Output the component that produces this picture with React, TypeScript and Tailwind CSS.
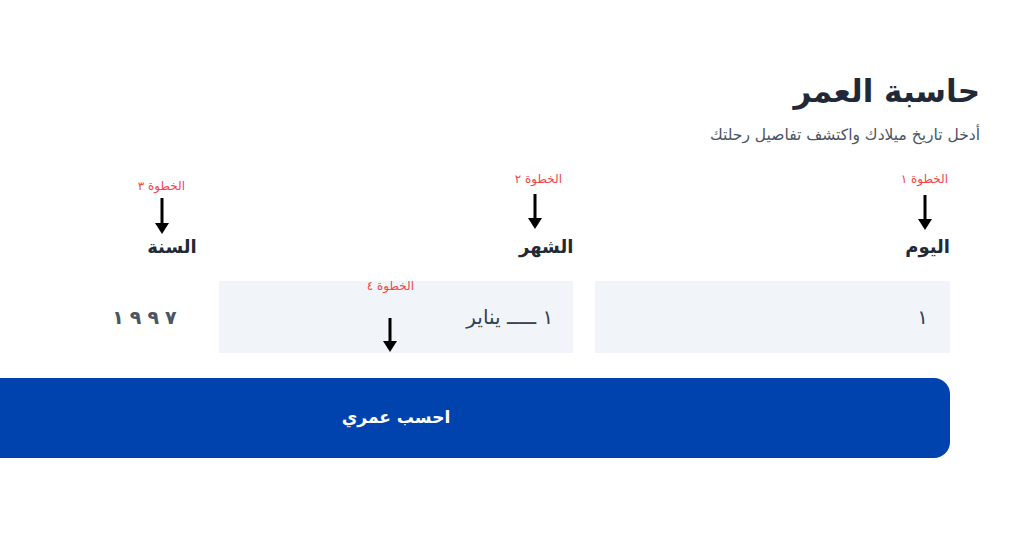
import React from "react";

function Arrow({ x, y, h }: { x: number; y: number; h: number }) {
  return (
    <svg
      className="absolute"
      style={{ left: x - 8, top: y }}
      width={16}
      height={h}
      viewBox={`0 0 16 ${h}`}
    >
      <rect x={6.5} y={0} width={3} height={h - 9} fill="#000" />
      <polygon points={`1,${h - 11} 15,${h - 11} 8,${h}`} fill="#000" />
    </svg>
  );
}

function Step({ text, right, top }: { text: string; right: number; top: number }) {
  return (
    <div
      className="absolute text-[12px] leading-[14px] text-[#f04848] whitespace-nowrap"
      style={{ right, top }}
    >
      {text}
    </div>
  );
}

export default function App() {
  return (
    <div
      dir="rtl"
      className="relative w-[1024px] h-[538px] overflow-hidden bg-white font-['DejaVu_Sans',sans-serif]"
    >
      <div className="pr-[44px] pt-[71px]">
        <h1 className="text-[31px] leading-[40px] font-bold text-[#1f2937]">حاسبة العمر</h1>
        <p className="mt-[14px] text-[15.5px] leading-[20px] text-[#4b5563]">
          أدخل تاريخ ميلادك واكتشف تفاصيل رحلتك
        </p>
      </div>

      <div className="mr-[74px] w-[1108px] mt-[88px]">
        <div className="grid grid-cols-3 gap-[22px]">
          <div className="flex flex-col gap-[20px]">
            <label className="text-[18px] leading-[28px] font-bold text-[#1f2937]">اليوم</label>
            <div className="h-[72px] bg-[#f1f5f9] flex items-center pr-[22px] text-[20px] text-[#374151]">
              ١
            </div>
          </div>
          <div className="flex flex-col gap-[20px]">
            <label className="text-[18px] leading-[28px] font-bold text-[#1f2937]">الشهر</label>
            <div className="h-[72px] bg-[#f1f5f9] flex items-center pr-[20px] text-[20px] text-[#374151]">
              ١ ـــــ يناير
            </div>
          </div>
          <div className="flex flex-col gap-[20px]">
            <label className="text-[18px] leading-[28px] font-bold text-[#1f2937]">السنة</label>
            <div className="h-[72px] flex items-center pr-[20px]">
              <div
                dir="ltr"
                className="flex gap-[6px] text-[19px] font-bold text-[#4b5563]"
              >
                <span>١</span>
                <span>٩</span>
                <span>٩</span>
                <span>٧</span>
              </div>
            </div>
          </div>
        </div>

        <button className="mt-[25px] w-full h-[80px] rounded-[16px] bg-[#0043ae] text-white text-[17px] font-bold">
          احسب عمري
        </button>
      </div>

      <Step text="الخطوة ١" right={76} top={172} />
      <Arrow x={925} y={195} h={35} />
      <Step text="الخطوة ٢" right={462} top={172} />
      <Arrow x={535} y={194} h={35} />
      <Step text="الخطوة ٣" right={839} top={179} />
      <Arrow x={162} y={198} h={36} />
      <Step text="الخطوة ٤" right={610} top={279} />
      <Arrow x={390} y={318} h={34} />
    </div>
  );
}
